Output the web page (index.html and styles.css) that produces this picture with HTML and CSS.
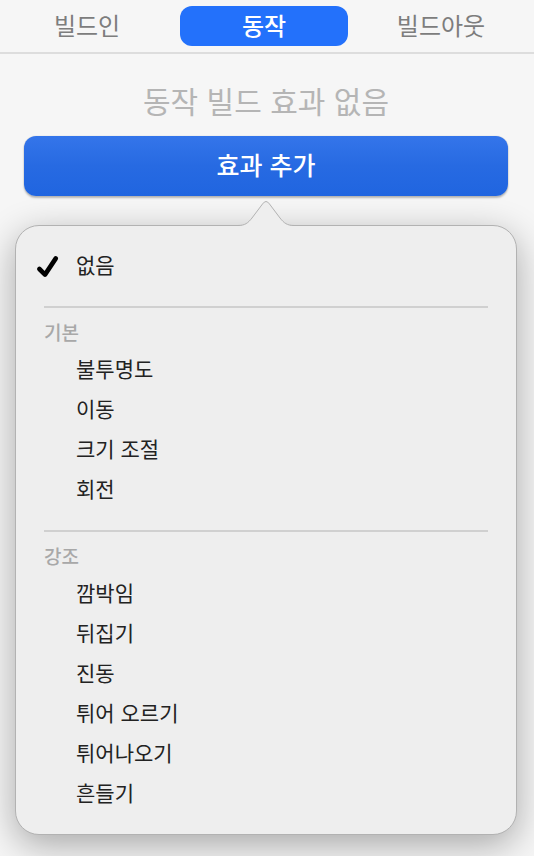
FILE: index.html
```html
<!DOCTYPE html>
<html lang="ko">
<head>
<meta charset="utf-8">
<meta name="viewport" content="width=device-width, initial-scale=1">
<title>빌드 효과</title>
<link rel="stylesheet" href="styles.css">
</head>
<body>
<nav class="tabs" role="tablist">
  <button class="tab" type="button" role="tab" aria-selected="false">빌드인</button>
  <button class="tab tab-active" type="button" role="tab" aria-selected="true">동작</button>
  <button class="tab" type="button" role="tab" aria-selected="false">빌드아웃</button>
</nav>
<main class="panel">
  <h1 class="status">동작 빌드 효과 없음</h1>
  <button class="add" type="button" aria-haspopup="menu" aria-expanded="true">효과 추가</button>
  <div class="popover" role="menu">
    <svg class="arrow" viewBox="0 0 60 27" aria-hidden="true">
      <path class="arrow-fill" d="M0 25.5H2C9 25.5 12 23 16 18L26.5 4Q30 -1 33.5 4L44 18C48 23 51 25.5 58 25.5H60V27H0Z"/>
      <path class="arrow-line" d="M0 25.5H2C9 25.5 12 23 16 18L26.5 4Q30 -1 33.5 4L44 18C48 23 51 25.5 58 25.5H60"/>
    </svg>
    <button class="item" type="button" role="menuitemradio" aria-checked="true">
      <svg class="check" viewBox="0 0 24 24" aria-hidden="true"><path d="M3.4 14L9 19.6L19.8 3.4"/></svg>없음</button>
    <section class="group" role="group" aria-labelledby="basic">
      <h2 class="label" id="basic">기본</h2>
      <button class="item" type="button" role="menuitemradio" aria-checked="false">불투명도</button>
      <button class="item" type="button" role="menuitemradio" aria-checked="false">이동</button>
      <button class="item" type="button" role="menuitemradio" aria-checked="false">크기 조절</button>
      <button class="item" type="button" role="menuitemradio" aria-checked="false">회전</button>
    </section>
    <section class="group" role="group" aria-labelledby="emphasis">
      <h2 class="label" id="emphasis">강조</h2>
      <button class="item" type="button" role="menuitemradio" aria-checked="false">깜박임</button>
      <button class="item" type="button" role="menuitemradio" aria-checked="false">뒤집기</button>
      <button class="item" type="button" role="menuitemradio" aria-checked="false">진동</button>
      <button class="item" type="button" role="menuitemradio" aria-checked="false">튀어 오르기</button>
      <button class="item" type="button" role="menuitemradio" aria-checked="false">튀어나오기</button>
      <button class="item" type="button" role="menuitemradio" aria-checked="false">흔들기</button>
    </section>
  </div>
</main>
</body>
</html>
```

FILE: styles.css
```css
* {
  box-sizing: border-box;
}

body {
  margin: 0;
  background: #f6f6f6;
  font-family: "Noto Sans CJK KR", sans-serif;
}

button {
  margin: 0;
  padding: 0;
  border: 0;
  background: none;
  font-family: inherit;
}

.tabs {
  display: grid;
  grid-template-columns: repeat(3, 1fr);
  gap: 9px;
  padding: 6px 9px 6px 3px;
  border-bottom: 2px solid #dddddd;
}

.tab {
  height: 40px;
  padding-bottom: 2px;
  border-radius: 12px;
  color: #7d7d7d;
  font-size: 24px;
  line-height: 38px;
}

.tab-active {
  background: #2371fb;
  color: #ffffff;
  font-weight: 500;
}

.panel {
  padding: 26px 17px 21px 15px;
}

.status {
  margin: 0;
  color: #b5b5b5;
  font-size: 30px;
  font-weight: 400;
  line-height: 40px;
  text-align: center;
}

.add {
  position: relative;
  z-index: 2;
  display: block;
  width: calc(100% - 18px);
  height: 60px;
  margin: 16px 9px 29px;
  padding-bottom: 4px;
  border-radius: 12px;
  background: linear-gradient(#3475ea, #276ae2 50%, #2065e0);
  box-shadow: 0 0 1px rgba(0, 0, 0, 0.3), 0 2px 2px rgba(0, 0, 0, 0.25);
  color: #ffffff;
  font-size: 25px;
  font-weight: 500;
  line-height: 56px;
}

.popover {
  position: relative;
  padding: 20px 28px;
  border: 1px solid #b2b2b2;
  border-radius: 24px;
  background: #eeeeee;
  box-shadow: 0 10px 36px rgba(0, 0, 0, 0.32);
}

.arrow {
  position: absolute;
  bottom: calc(100% - 1px);
  left: 50%;
  width: 60px;
  height: 27px;
  margin-left: -30px;
}

.arrow-fill {
  fill: #eeeeee;
}

.arrow-line {
  fill: none;
  stroke: #b2b2b2;
}

.item {
  position: relative;
  display: block;
  width: 100%;
  height: 40px;
  padding: 0 0 4px 32px;
  color: #222222;
  font-size: 21px;
  line-height: 36px;
  text-align: left;
}

.check {
  position: absolute;
  top: 9px;
  left: -8px;
  width: 24px;
  height: 24px;
  fill: none;
  stroke: #000000;
  stroke-width: 4.6;
  stroke-linecap: round;
  stroke-linejoin: round;
}

.group {
  margin-top: 20px;
  border-top: 2px solid #d0d0d0;
}

.label {
  margin: 0;
  padding: 6px 0 0;
  color: #a8a8a8;
  font-size: 19px;
  font-weight: 500;
  line-height: 36px;
}
```
